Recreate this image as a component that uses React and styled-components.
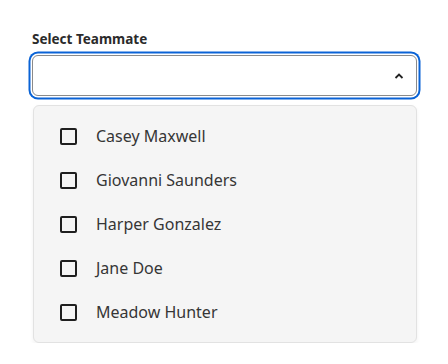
import React from "react";
import styled, { createGlobalStyle } from "styled-components";

const Global = createGlobalStyle`
  html, body { margin: 0; padding: 0; background: #fff; }
  body { font-family: "Noto Sans", "Open Sans", sans-serif; }
`;

const Wrap = styled.div`
  padding: 30px 32px 0 32px;
  width: 385px;
`;

const Label = styled.label`
  display: block;
  font-size: 13.5px;
  font-weight: 700;
  color: #2b2b2b;
  line-height: 18px;
  margin-bottom: 7px;
`;

const Field = styled.div`
  box-sizing: border-box;
  height: 41px;
  border: 1.5px solid #8a8a8a;
  border-radius: 6px;
  display: flex;
  align-items: center;
  justify-content: flex-end;
  padding-right: 12px;
  box-shadow: 0 0 0 1.5px #fff, 0 0 0 3.5px #0a63d6;
  background: #fff;
`;

const Panel = styled.div`
  box-sizing: border-box;
  margin: 9px 0 0 1px;
  width: 384px;
  background: #f5f5f5;
  border: 1px solid #e2e2e2;
  border-radius: 6px;
  box-shadow: 0 2px 4px rgba(0, 0, 0, 0.06);
  padding: 8px 0;
`;

const Row = styled.div`
  height: 44px;
  display: flex;
  align-items: center;
  padding-left: 26px;
  gap: 19px;
  font-size: 16px;
  color: #363636;
`;

const Box = styled.span`
  box-sizing: border-box;
  width: 17px;
  height: 17px;
  border: 2px solid #1f1f1f;
  border-radius: 2px;
  flex: none;
`;

const names = [
  "Casey Maxwell",
  "Giovanni Saunders",
  "Harper Gonzalez",
  "Jane Doe",
  "Meadow Hunter",
];

export default function App() {
  return (
    <>
      <Global />
      <Wrap>
        <Label>Select Teammate</Label>
        <Field>
          <svg width="10" height="6" viewBox="0 0 10 6">
            <path d="M1.5 5 L5 1.6 L8.5 5" fill="none" stroke="#222" strokeWidth="1.8" />
          </svg>
        </Field>
        <Panel>
          {names.map((n) => (
            <Row key={n}>
              <Box />
              <span>{n}</span>
            </Row>
          ))}
        </Panel>
      </Wrap>
    </>
  );
}
